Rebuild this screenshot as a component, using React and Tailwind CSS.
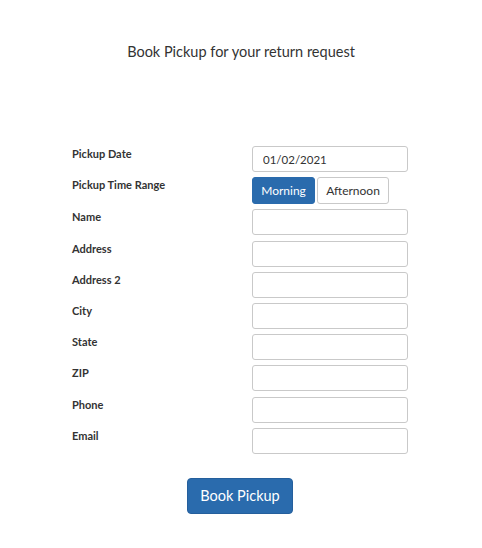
import React, { useState } from 'react';

const fields = ['Name', 'Address', 'Address 2', 'City', 'State', 'ZIP', 'Phone', 'Email'];

function Label({ children }) {
  return <div className="text-[11px] leading-[16px] font-bold text-[#333]">{children}</div>;
}

export default function App() {
  const [range, setRange] = useState('morning');

  return (
    <div className="w-[482px] h-[548px] bg-white text-[#333]" style={{ fontFamily: 'Lato, "Noto Sans", sans-serif' }}>
      <h1 className="pt-[42px] text-center text-[14.5px] leading-[20px]">Book Pickup for your return request</h1>

      <form className="mt-[84px] pl-[72px] grid grid-cols-[180px_156px] gap-y-[5.2px]">
        <Label>Pickup Date</Label>
        <input
          defaultValue="01/02/2021"
          className="h-[26px] w-[156px] rounded-[3px] border border-[#c9c9c9] px-[10px] text-[11.5px] text-[#333] outline-none"
        />

        <Label>Pickup Time Range</Label>
        <div className="flex gap-[2px]">
          <button
            type="button"
            onClick={() => setRange('morning')}
            className={`h-[27px] w-[63px] rounded-[3px] border text-[12px] ${range === 'morning' ? 'bg-[#2a6bad] border-[#2a6bad] text-white' : 'bg-white border-[#c9c9c9] text-[#333]'}`}
          >
            Morning
          </button>
          <button
            type="button"
            onClick={() => setRange('afternoon')}
            className={`h-[27px] w-[72px] rounded-[3px] border text-[12px] ${range === 'afternoon' ? 'bg-[#2a6bad] border-[#2a6bad] text-white' : 'bg-white border-[#c9c9c9] text-[#333]'}`}
          >
            Afternoon
          </button>
        </div>

        {fields.map(f => (
          <React.Fragment key={f}>
            <Label>{f}</Label>
            <input className="h-[26px] w-[156px] rounded-[3px] border border-[#c9c9c9] px-[10px] text-[11.5px] outline-none" />
          </React.Fragment>
        ))}
      </form>

      <div className="mt-[24px] pl-[187px]">
        <button type="button" className="h-[36px] w-[106px] rounded-[4px] bg-[#2a6bad] border border-[#255f9c] text-white text-[14.5px]">
          Book Pickup
        </button>
      </div>
    </div>
  );
}
